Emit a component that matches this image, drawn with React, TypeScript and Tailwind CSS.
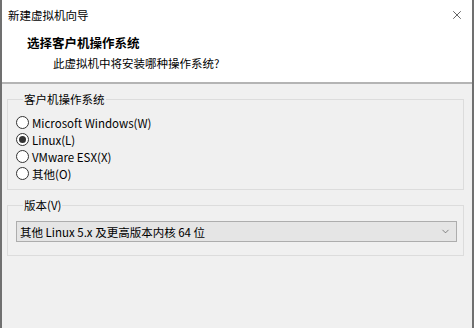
import { X, ChevronDown } from "lucide-react";

const osOptions = [
  { id: "win", label: "Microsoft Windows(W)" },
  { id: "linux", label: "Linux(L)" },
  { id: "esx", label: "VMware ESX(X)" },
  { id: "other", label: "其他(O)" },
];

function Radio({ label, checked }: { label: string; checked?: boolean }) {
  return (
    <label className="flex h-[17px] items-center gap-[3px]">
      <span className="flex h-[13px] w-[13px] items-center justify-center rounded-full border border-[#333] bg-white">
        {checked && <span className="h-[7px] w-[7px] rounded-full bg-[#333]" />}
      </span>
      <span>{label}</span>
    </label>
  );
}

export default function App() {
  return (
    <div
      className="h-[328px] w-[474px] overflow-hidden border-x-2 border-[#707070] bg-[#f0f0f0] text-[11.5px] leading-[16px] text-black"
      style={{ fontFamily: '"Noto Sans CJK SC", "Noto Sans", sans-serif' }}
    >
      {/* Title + header */}
      <div className="bg-white">
        <div className="flex h-[29px] items-center justify-between pl-[6px] pr-[8px]">
          <span>新建虚拟机向导</span>
          <X size={14} strokeWidth={1.2} className="text-[#222]" />
        </div>
        <div className="pb-[11px] pl-[25px] pt-[6px]">
          <div className="text-[12.5px] font-bold">选择客户机操作系统</div>
          <div className="mt-[4px] pl-[26px]">此虚拟机中将安装哪种操作系统?</div>
        </div>
      </div>
      <div className="h-[2px] bg-[#b4b4b4]" />

      <div className="pl-[5px] pr-[8px] pt-[7px]">
        <fieldset className="border border-[#dcdcdc] pb-[7px] pl-[8px] pt-[7px]">
          <legend className="ml-[7px] px-[1px]">客户机操作系统</legend>
          {osOptions.map((o) => (
            <Radio key={o.id} label={o.label} checked={o.id === "linux"} />
          ))}
        </fieldset>

        <fieldset className="mt-[7px] border border-[#dcdcdc] pb-[13px] pl-[8px] pr-[6px] pt-[8px]">
          <legend className="ml-[7px] px-[1px]">版本(V)</legend>
          <div className="flex h-[21px] items-center justify-between border border-[#adadad] bg-[#e5e5e5] pl-[3px] pr-[5px]">
            <span>其他 Linux 5.x 及更高版本内核 64 位</span>
            <ChevronDown size={11} strokeWidth={1.5} className="text-[#555]" />
          </div>
        </fieldset>
      </div>
    </div>
  );
}
